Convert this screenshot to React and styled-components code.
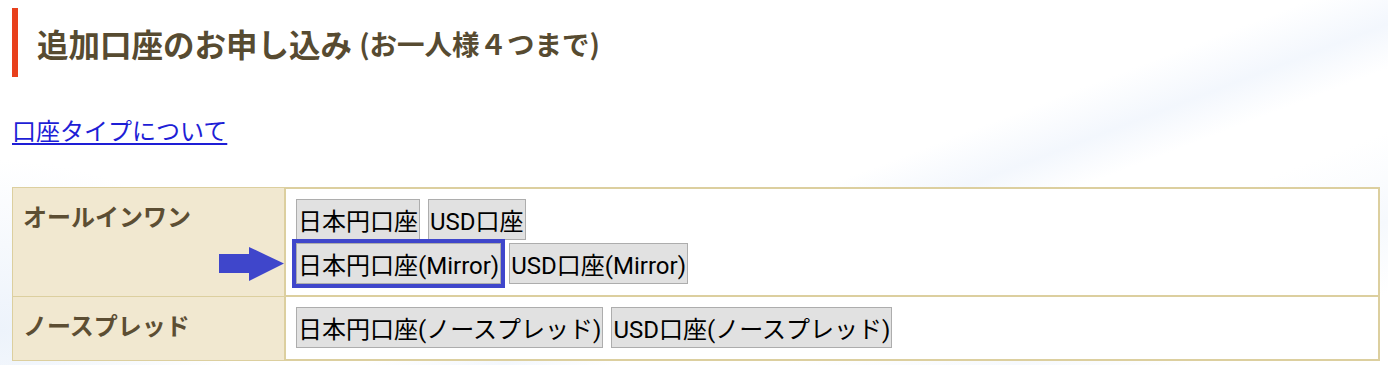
import styled, { createGlobalStyle } from "styled-components";

const GlobalStyle = createGlobalStyle`
  html, body {
    margin: 0;
    padding: 0;
  }

  body {
    font-family: "Noto Sans CJK JP", "Noto Sans", sans-serif;
    background-color: #ffffff;
    background-image:
      linear-gradient(-21deg, rgba(255,255,255,0) 33%, #f3f7fd 38%, rgba(255,255,255,0) 44%),
      linear-gradient(-21deg, rgba(255,255,255,0) 8%, #f6f9fd 16%, rgba(255,255,255,0) 26%),
      radial-gradient(ellipse 240px 170px at 0 330px, #edf3fb, rgba(255,255,255,0));
    min-height: 365px;
  }
`;

const accounts = [
  {
    type: "オールインワン",
    lines: [
      [{ label: "日本円口座" }, { label: "USD口座" }],
      [{ label: "日本円口座(Mirror)", selected: true }, { label: "USD口座(Mirror)" }],
    ],
  },
  {
    type: "ノースプレッド",
    lines: [[{ label: "日本円口座(ノースプレッド)" }, { label: "USD口座(ノースプレッド)" }]],
  },
];

export default function App() {
  return (
    <>
      <GlobalStyle />
      <Page>
        <Heading>
          追加口座のお申し込み <small>(お一人様４つまで)</small>
        </Heading>

        <TypeLink href="#">口座タイプについて</TypeLink>

        <Table>
          <tbody>
            {accounts.map((row) => (
              <tr key={row.type}>
                <TypeCell>
                  {row.type}
                  {row.lines.some((line) => line.some((b) => b.selected)) && (
                    <Arrow viewBox="0 0 65 34">
                      <polygon points="0,7 30,7 30,0 65,16.5 30,34 30,26 0,26" />
                    </Arrow>
                  )}
                </TypeCell>
                <ButtonCell>
                  {row.lines.map((line, i) => (
                    <ButtonLine key={i}>
                      {line.map((b) => (
                        <AccountButton key={b.label} $selected={b.selected}>
                          {b.label}
                        </AccountButton>
                      ))}
                    </ButtonLine>
                  ))}
                </ButtonCell>
              </tr>
            ))}
          </tbody>
        </Table>
      </Page>
    </>
  );
}

const Page = styled.div`
  display: flex;
  flex-direction: column;
  align-items: flex-start;
  padding: 8px 8px 0 12px;
`;

const Heading = styled.h2`
  margin: 0;
  height: 69px;
  display: flex;
  align-items: center;
  padding-left: 19px;
  border-left: 6px solid #e8401c;
  font-size: 31.5px;
  font-weight: 700;
  color: #574b31;
  white-space: pre;

  small {
    font-size: 27.5px;
    font-weight: 700;
  }
`;

const TypeLink = styled.a`
  margin-top: 35px;
  font-size: 24px;
  line-height: 35px;
  color: #1e1ed6;
  text-decoration: underline;
  text-underline-offset: 3px;
`;

const Table = styled.table`
  margin-top: 40px;
  width: 1368px;
  border-collapse: collapse;
  border: 1px solid #dccf9f;
`;

const TypeCell = styled.th`
  position: relative;
  width: 251px;
  padding: 10px;
  vertical-align: top;
  text-align: left;
  background: #f1e8d0;
  border: 1px solid #dccf9f;
  font-size: 24px;
  font-weight: 700;
  line-height: 35px;
  color: #5c4e33;
`;

const Arrow = styled.svg`
  position: absolute;
  right: 0;
  top: 59px;
  width: 65px;
  height: 34px;
  fill: #3f46cb;
`;

const ButtonCell = styled.td`
  padding: 10px 9px 11px 10px;
  vertical-align: top;
  background: #ffffff;
  border: 1px solid #dccf9f;
  display: flex;
  flex-direction: column;
  gap: 3px;
`;

const ButtonLine = styled.div`
  display: flex;
  gap: 8px;
`;

const AccountButton = styled.button`
  height: 41px;
  padding: 0 1px;
  border: 1px solid #adadad;
  background: #e1e1e1;
  font-family: Roboto, "Noto Sans CJK JP", sans-serif;
  font-size: 24px;
  color: #000000;
  cursor: pointer;
  outline: ${(p) => (p.$selected ? "4px solid #3f46cb" : "none")};
`;
